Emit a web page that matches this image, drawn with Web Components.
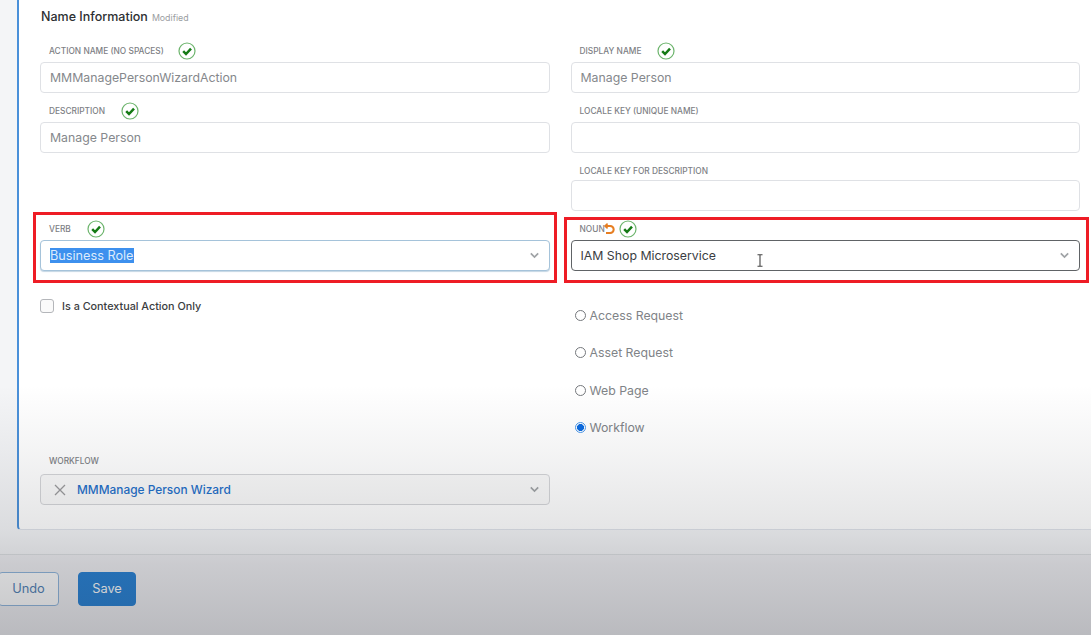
<!DOCTYPE html>
<html lang="en">
<head>
<meta charset="utf-8">
<title>Name Information</title>
<style>
html,body{margin:0;padding:0;height:635px;overflow:hidden;background:#f4f5f7;font-family:Inter,"Liberation Sans",sans-serif}
</style>
</head>
<body>
<wizard-page>
  <form-panel heading="Name Information" note="Modified">
    <form-column slot="left">
      <form-field label="ACTION NAME (NO SPACES)" ok="14"><text-box value="MMManagePersonWizardAction"></text-box></form-field>
      <form-field label="DESCRIPTION" ok="16" style="margin-top:9px"><text-box value="Manage Person"></text-box></form-field>
      <form-field label="VERB" ok="16" style="margin-top:67px"><select-box value="Business Role" state="selected"></select-box></form-field>
      <check-option style="margin-top:25px">Is a Contextual Action Only</check-option>
      <form-field label="WORKFLOW" high style="margin-top:138px"><select-box value="MMManage Person Wizard" state="chosen"></select-box></form-field>
    </form-column>
    <form-column slot="right">
      <form-field label="DISPLAY NAME" ok="16"><text-box value="Manage Person"></text-box></form-field>
      <form-field label="LOCALE KEY (UNIQUE NAME)" style="margin-top:9px"><text-box></text-box></form-field>
      <form-field label="LOCALE KEY FOR DESCRIPTION" low style="margin-top:7px"><text-box></text-box></form-field>
      <form-field label="NOUN" undo ok="4" style="margin-top:9px"><select-box value="IAM Shop Microservice" state="active"></select-box></form-field>
      <radio-option style="margin-top:34px">Access Request</radio-option>
      <radio-option style="margin-top:17.5px">Asset Request</radio-option>
      <radio-option style="margin-top:17.5px">Web Page</radio-option>
      <radio-option checked style="margin-top:17.5px">Workflow</radio-option>
    </form-column>
  </form-panel>
  <page-footer></page-footer>
</wizard-page>
<script>
function el(name, html, init){
  customElements.define(name, class extends HTMLElement{
    connectedCallback(){
      if(this.shadowRoot) return;
      const r=this.attachShadow({mode:'open'});
      r.innerHTML=html(this);
      if(init) init(this,r);
    }
  });
}
const esc=s=>(s||'').replace(/&/g,'&amp;').replace(/</g,'&lt;');

el('wizard-page',()=>`<style>
:host{display:flex;flex-direction:column;width:1091px;height:635px;position:relative;overflow:hidden}
.shade{position:absolute;inset:0;pointer-events:none;z-index:5;
 background:linear-gradient(to bottom,rgba(40,42,50,0) 0,rgba(40,42,50,0) 385px,rgba(40,42,50,.05) 450px,rgba(40,42,50,.12) 529px,rgba(40,42,50,.19) 565px,rgba(40,42,50,.27) 635px)}
.mark{position:absolute;box-sizing:border-box;border:3px solid #ee1c25;pointer-events:none;z-index:6}
.beam{position:absolute;left:756px;top:254px;z-index:7}
</style>
<slot></slot>
<div class="shade"></div>
<div class="mark" style="left:33px;top:212px;width:524px;height:71px"></div>
<div class="mark" style="left:564px;top:217px;width:525px;height:66px"></div>
<svg class="beam" width="8" height="13" viewBox="0 0 8 13" fill="none" stroke="#444" stroke-width="1.1"><path d="M1.5 .8h5M4 .8v11.4M1.5 12.2h5"/></svg>`);

el('form-panel',h=>`<style>
:host{display:block;margin-left:17px;height:530px;box-sizing:border-box;background:#fff;border-left:2px solid #4a90d9;border-bottom:1px solid #dfe3ea;border-bottom-left-radius:4px;padding:8px 11px 0 21px}
.head{display:flex;align-items:baseline;gap:4px;height:18px;line-height:18px;margin-bottom:16px;padding-left:1px;white-space:nowrap}
.t{font-size:12.5px;font-weight:500;color:#2d2f33}
.n{font-size:8.8px;color:#9a9da1}
.cols{display:grid;grid-template-columns:1fr 1fr;gap:21px}
</style>
<div class="head"><span class="t">${esc(h.getAttribute('heading'))}</span><span class="n">${esc(h.getAttribute('note'))}</span></div>
<div class="cols"><slot name="left"></slot><slot name="right"></slot></div>`);

el('form-column',()=>`<style>:host{display:flex;flex-direction:column;min-width:0}</style><slot></slot>`);

el('ok-icon',()=>`<style>:host{display:inline-flex;width:18px;height:18px}</style>
<svg width="18" height="18" viewBox="0 0 18 18" fill="none"><circle cx="9" cy="9" r="8" stroke="#6cb46c" stroke-width="1.2" fill="#fff"/><path d="M5.2 9.1l2.8 2.9 5-5.4" stroke="#157a15" stroke-width="2.5"/></svg>`);

el('form-field',h=>{
  const ok=h.getAttribute('ok');
  const pad=h.hasAttribute('low')?'2px 0 0 9px':h.hasAttribute('high')?'0 0 6px 9px':'0 0 2px 9px';
  return `<style>
:host{display:block}
.row{display:flex;align-items:center;height:20px;padding:${pad};box-sizing:border-box;white-space:nowrap}
.l{font-size:8.35px;font-weight:500;color:#7d8084}
.undo{display:inline-flex;margin-left:-2px}
ok-icon{margin-left:${ok||0}px}
</style>
<div class="row"><span class="l">${esc(h.getAttribute('label'))}</span>${h.hasAttribute('undo')?`<svg class="undo" width="12" height="12" viewBox="0 0 12 12" fill="none" stroke="#e67e22" stroke-width="2"><path d="M2 3h5.2a3.4 3.4 0 0 1 0 7H3"/><path d="M4.6 .6 2 3l2.6 2.4" stroke-width="1.6"/></svg>`:''}${ok?'<ok-icon></ok-icon>':''}</div>
<slot></slot>`;
});

el('text-box',h=>`<style>
:host{display:block;height:31px;box-sizing:border-box;border:1px solid #dfe1e5;border-radius:4px;background:#fff;padding:0 9px;line-height:29px;font-size:12.3px;color:#85888c;white-space:nowrap;overflow:hidden}
</style>${esc(h.getAttribute('value'))}`);

el('select-box',h=>{
  const s=h.getAttribute('state');
  const v=esc(h.getAttribute('value'));
  const body= s==='selected'?`<span class="sel">${v}</span>`
    : s==='chosen'?`<svg class="x" width="12" height="12" viewBox="0 0 12 12" stroke="#9a9a9c" stroke-width="1.3" fill="none"><path d="M1 1l10 10M11 1L1 11"/></svg><span class="ch">${v}</span>`
    : `<span class="ac">${v}</span>`;
  return `<style>
:host{display:flex;align-items:center;height:31px;box-sizing:border-box;border-radius:4px;background:#fff;padding:0 10px ${s==='chosen'?0:1}px 9px;white-space:nowrap;
 border:${s==='active'?'1.5px solid #606366':s==='selected'?'1px solid #a5c3da':'1px solid #d4d5d8'};${s==='selected'?'box-shadow:0 1px 1px #c4d6e4;':''}${s==='chosen'?'background:#fafafa;':''}}
.sel{font-size:12.7px;background:#3d90ee;color:#dcebfc;line-height:15px}
.ac{font-size:12.3px;color:#3a3d42}
.x{margin:0 10px 0 4px}
.ch{font-size:11.9px;color:#1f6fc9;font-weight:500;margin-left:1px}
.c{margin-left:auto}
</style>${body}<svg class="c" width="9" height="7" viewBox="0 0 9 7" fill="none" stroke="#a0a3a6" stroke-width="1.7"><path d="M.8 1.4l3.7 3.6 3.7-3.6"/></svg>`;
});

el('check-option',()=>`<style>
:host{display:flex;align-items:center;height:20px;font-size:10.8px;font-weight:500;color:#3b3d41;white-space:nowrap}
.b{width:14px;height:14px;box-sizing:border-box;border:1px solid #b4b6ba;border-radius:3px;background:#fafafa;margin-right:8px}
</style><span class="b"></span><slot></slot>`);

el('radio-option',h=>`<style>
:host{display:flex;align-items:center;height:20px;font-size:12.3px;color:#808387;white-space:nowrap;padding-left:4px}
.r{width:11px;height:11px;box-sizing:border-box;border-radius:50%;border:1px solid #75787c;background:#fff;margin-right:4px;position:relative}
.on{border-color:#4a97ea;background:radial-gradient(circle,#0a6ae0 0 3.2px,#fff 3.8px)}
</style><span class="r ${h.hasAttribute('checked')?'on':''}"></span><slot></slot>`);

el('page-footer',()=>`<style>
:host{display:flex;gap:19px;align-items:flex-start;margin-top:24px;border-top:1px solid #dde0e2;background:#f0f0f3;padding-top:16.5px;flex:1}
button{all:unset;box-sizing:border-box;display:flex;align-items:center;justify-content:center;height:34px;border-radius:4px;font:12.8px Inter,"Liberation Sans",sans-serif}
.u{width:61px;margin-left:-2px;border:1px solid #8fb6dd;background:#fff;color:#4f7fb5}
.s{width:58px;background:#2580d4;border:1px solid #2580d4;color:#fff}
</style><button class="u">Undo</button><button class="s">Save</button>`);
</script>
</body>
</html>
